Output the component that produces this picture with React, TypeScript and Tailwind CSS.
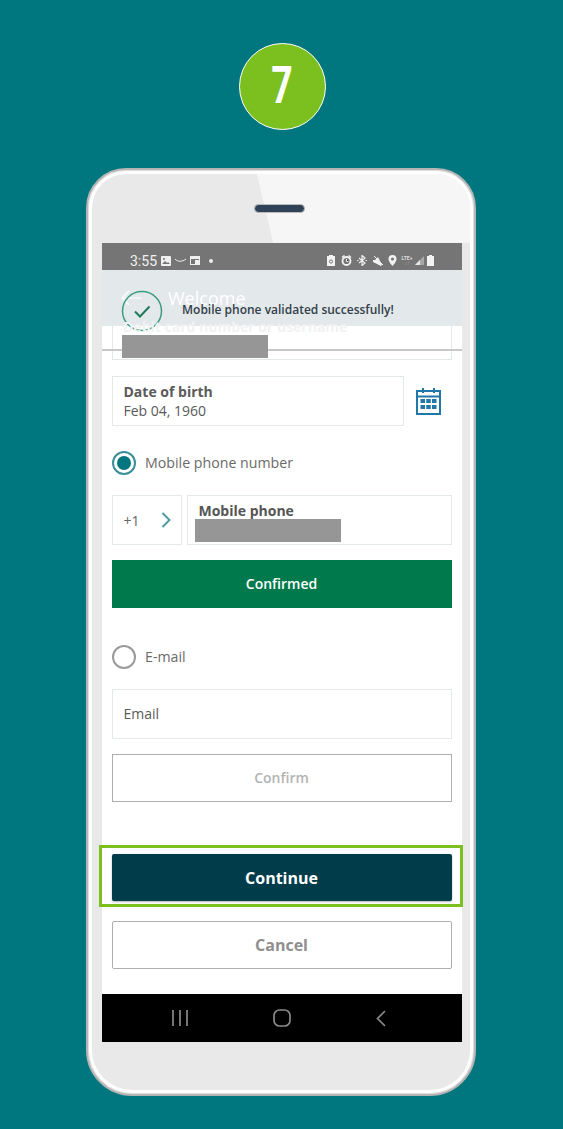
import React from "react";

const font = "font-['Open_Sans',sans-serif]";

function Radio({ checked, label }: { checked?: boolean; label: string }) {
  return (
    <div className="flex items-center gap-[9px]">
      <span
        className={`flex h-[24px] w-[24px] items-center justify-center rounded-full border-2 ${
          checked ? "border-[#3a8f98]" : "border-[#9a9a9a]"
        }`}
      >
        {checked && <span className="h-[14px] w-[14px] rounded-full bg-[#00767f]" />}
      </span>
      <span className="text-[14.2px] leading-[22px] text-[#6a6a6a]">{label}</span>
    </div>
  );
}

function StatusLeft() {
  return (
    <div className="flex items-center text-white">
      <span className="w-[30px] font-['Roboto',sans-serif] text-[14px] leading-[20px] text-[#f2f2f2]">3:55</span>
      <svg className="ml-[1px]" width="10" height="10" viewBox="0 0 10 10">
        <rect width="10" height="10" rx="1" fill="#f0f0f0" />
        <path d="M1 8l3-3 2 2 1-1 2 2z" fill="#757575" />
        <circle cx="3" cy="3" r="1" fill="#757575" />
      </svg>
      <svg className="ml-[4px]" width="11" height="6" viewBox="0 0 11 6">
        <path d="M0 1c3 3 7 3 11 0" stroke="#eee" strokeWidth="1" fill="none" />
      </svg>
      <svg className="ml-[4px]" width="10" height="9" viewBox="0 0 10 9">
        <rect x=".5" y=".5" width="9" height="8" fill="none" stroke="#eee" />
        <rect x="1" y="1" width="8" height="2" fill="#eee" />
        <rect x="5" y="4" width="4" height="4" fill="#eee" />
      </svg>
      <span className="ml-[9px] h-[4px] w-[4px] rounded-full bg-[#eee]" />
    </div>
  );
}

function StatusRight() {
  return (
    <div className="flex items-center">
      <svg width="8" height="11" viewBox="0 0 8 11">
        <path d="M2 0h4v1h2v10H0V1h2z" fill="#f2f2f2" />
        <circle cx="4" cy="6.500" r="1.600" fill="none" stroke="#757575" />
      </svg>
      <svg className="ml-[6px]" width="11" height="11" viewBox="0 0 11 11">
        <circle cx="5.500" cy="6" r="4" fill="#757575" stroke="#f2f2f2" strokeWidth="1.800" />
        <path d="M1 2.500l2.500-2M10 2.500L7.500 .5" stroke="#f2f2f2" strokeWidth="1.500" />
        <path d="M5.500 4v2.500h2" stroke="#f2f2f2" />
      </svg>
      <svg className="ml-[5px]" width="10" height="11" viewBox="0 0 10 11">
        <path d="M2 3l6 5-3 2.500V.5L8 3 2 8" stroke="#f2f2f2" strokeWidth="1.200" fill="none" />
        <path d="M0 5.500h1.500M8.500 5.500H10" stroke="#f2f2f2" />
      </svg>
      <svg className="ml-[6px]" width="10" height="10" viewBox="0 0 10 10">
        <path d="M0 4h2l3-3 4 8-1 1L0 6z" fill="#f2f2f2" />
        <path d="M1 0l9 9" stroke="#f2f2f2" />
      </svg>
      <svg className="ml-[5px]" width="9" height="11" viewBox="0 0 9 11">
        <path d="M4.500 0a4 4 0 0 1 4 4c0 3-4 7-4 7s-4-4-4-7a4 4 0 0 1 4-4z" fill="#f2f2f2" />
        <circle cx="4.500" cy="4" r="1.600" fill="#757575" />
      </svg>
      <span className="ml-[4px] flex w-[12px] flex-col items-center font-['Roboto',sans-serif] text-[5px] font-bold leading-[5px] text-[#ddd]">
        <span>LTE+</span>
        <span className="text-[#aaa]">↓↑</span>
      </span>
      <svg className="ml-[2px]" width="9" height="9" viewBox="0 0 9 9">
        <path d="M9 0v9H0z" fill="#a8a8a8" />
        <path d="M5 4v5H0z" fill="#e8e8e8" />
      </svg>
      <svg className="ml-[3px]" width="7" height="11" viewBox="0 0 7 11">
        <path d="M2 0h3v1h2v10H0V1h2z" fill="#f2f2f2" />
      </svg>
    </div>
  );
}

function Screen() {
  return (
    <div className="relative ml-[10px] flex h-[799px] w-[360px] flex-col bg-white">
      {/* status bar */}
      <div className="flex h-[27px] shrink-0 items-center justify-between bg-[#757575] pl-[28px] pr-[28px] pt-[8px]">
        <StatusLeft />
        <StatusRight />
      </div>

      {/* app header, mostly covered by the toast */}
      <div className="relative z-10 h-[56px] shrink-0 bg-[#e3e8eb]">
        <svg className="absolute left-[18px] top-[18px]" width="22" height="20" viewBox="0 0 22 20">
          <path d="M9 3l-7 7 7 7M2 10h20" stroke="#fff" strokeWidth="1.200" fill="none" />
        </svg>
        <span className="absolute left-[66px] top-[15px] text-[18px] leading-[26px] text-white">Welcome</span>
        <svg className="absolute left-[19px] top-[20px]" width="42" height="42" viewBox="0 0 42 42">
          <circle cx="21" cy="21" r="19.500" fill="none" stroke="#3a9c7c" strokeWidth="1.500" />
          <path d="M14 21.500l5 5 9.500-10" fill="none" stroke="#1e7a5a" strokeWidth="2" />
        </svg>
        <span className="absolute left-[80px] top-[31px] text-[12px] font-semibold leading-[18px] text-[#333f48]">
          Mobile phone validated successfully!
        </span>
      </div>

      <div className="flex flex-1 flex-col px-[10px]">
        {/* field scrolled under the header */}
        <div className="relative -mt-[16px] h-[50px] border border-[#e3e8eb]">
          <span className="absolute left-[10px] top-[6px] z-20 whitespace-nowrap text-[14px] font-bold leading-[20px] text-[#f0f2f3]">
            Debit card number or username
          </span>
          <div className="absolute -left-[11px] -right-[11px] top-[38px] z-10 h-[2px] bg-[#c8c8c8]" />
          <div className="absolute left-[9px] top-[24px] z-20 h-[23px] w-[146px] bg-[#969696]" />
        </div>

        <div className="mt-[16px] flex items-center">
          <div className="h-[50px] w-[292px] border border-[#e3e8eb] pl-[10.500px] pt-[5px] text-[14px] leading-[19px] text-[#5a5a5a]">
            <div className="font-bold">Date of birth</div>
            <div>Feb 04, 1960</div>
          </div>
          <svg className="ml-[12px] -mt-[1px]" width="25" height="28" viewBox="0 0 25 28" fill="none">
            <rect x="1" y="4" width="23" height="23" stroke="#1f78a8" strokeWidth="2" />
            <path d="M1 9.500h23" stroke="#1f78a8" strokeWidth="2" />
            <path d="M7 1v5M18 1v5" stroke="#1f78a8" strokeWidth="2" />
            <path
              d="M4.500 12h4.500v4h-4.500zM10.250 12h4.500v4h-4.500zM16 12h4.500v4H16zM4.500 18h4.500v4h-4.500zM10.250 18h4.500v4h-4.500zM16 18h4.500v4H16z"
              fill="#1f78a8"
            />
          </svg>
        </div>

        <div className="mt-[25px]">
          <Radio checked label="Mobile phone number" />
        </div>

        <div className="mt-[20px] flex gap-[5px]">
          <div className="flex h-[50px] w-[70px] items-center justify-between border border-[#e3e8eb] pl-[10.500px] pr-[10px] text-[14px] text-[#666]">
            <span>+1</span>
            <svg width="10" height="16" viewBox="0 0 10 16" fill="none">
              <path d="M1.500 1l7 7-7 7" stroke="#4d9aa0" strokeWidth="2" />
            </svg>
          </div>
          <div className="relative h-[50px] flex-1 border border-[#e3e8eb] pl-[10.500px] pt-[5px] text-[14px] font-bold leading-[20px] text-[#555]">
            Mobile phone
            <div className="absolute left-[7px] top-[23px] h-[23px] w-[146px] bg-[#969696]" />
          </div>
        </div>

        <button className="mt-[15px] h-[48px] bg-[#007a4d] pb-[2px] pr-[1px] text-[14px] font-semibold text-white">Confirmed</button>

        <div className="mt-[37px]">
          <Radio label="E-mail" />
        </div>

        <div className="mt-[20px] flex h-[50px] items-center border border-[#e3e8eb] pb-[2px] pl-[10.500px] text-[14px] text-[#5a5a5a]">
          Email
        </div>

        <button className="mt-[15px] h-[48px] border border-[#aeaeae] bg-white pb-[2px] pr-[1px] text-[14px] font-semibold text-[#b3b3b3]">
          Confirm
        </button>

        <div className="relative mt-[52px] h-[47px]">
          <button className="h-full w-full rounded-[2px] bg-[#003c4a] pr-[1px] text-[16px] font-bold text-white shadow-[0_1px_2px_rgba(0,0,0,0.3)]">
            Continue
          </button>
          <div className="absolute -left-[13px] -right-[11px] -top-[9px] -bottom-[6px] border-[3px] border-[#7cc01f]" />
        </div>

        <button className="mt-[20px] h-[48px] rounded-[2px] border border-[#aeaeae] bg-white pr-[1px] text-[16px] font-bold text-[#8f8f8f]">
          Cancel
        </button>
      </div>

      {/* android nav bar */}
      <div className="flex h-[48px] shrink-0 items-center justify-between bg-black pl-[70px] pr-[76px]">
        <svg width="16" height="16" viewBox="0 0 16 16">
          <path d="M1 0v16M8 0v16M15 0v16" stroke="#8a8a8a" strokeWidth="1.700" />
        </svg>
        <svg width="18" height="18" viewBox="0 0 18 18" fill="none">
          <rect x="1" y="1" width="16" height="16" rx="5.500" stroke="#8a8a8a" strokeWidth="1.700" />
        </svg>
        <svg width="10" height="17" viewBox="0 0 10 17" fill="none">
          <path d="M9 1L1.500 8.500 9 16" stroke="#8a8a8a" strokeWidth="1.700" />
        </svg>
      </div>
    </div>
  );
}

export default function App() {
  return (
    <div className={`${font} flex h-[1129px] flex-col items-center overflow-hidden bg-[#00767f] pt-[43px]`}>
      <div className="ml-[1px] flex h-[87px] w-[87px] items-center justify-center rounded-full border border-white bg-[#7cc01f]">
        <span className="-translate-y-[1px] scale-x-[0.72] font-['Roboto',sans-serif] text-[52px] font-bold leading-none text-white">7</span>
      </div>

      <div className="relative mt-[38px] -ml-[1px] h-[928px] w-[390px] rounded-t-[40px] rounded-b-[46px] border-2 border-[#b5b5b5] bg-white p-[4px] shadow-[inset_0_0_0_1px_#dedede]">
        <div className="relative h-full w-full rounded-t-[34px] rounded-b-[40px] bg-[#e9e9e9] pt-[69px]">
          <div className="absolute inset-0 rounded-tr-[34px] bg-[#f6f6f6] [clip-path:polygon(43.650%_0,100%_0,100%_7.500%,47.900%_7.500%)]" />
          <div className="absolute left-[162px] top-[30px] h-[9px] w-[51px] rounded-full border border-[#bcbcbc] bg-[#2f4257]" />
          <div className="relative">
            <Screen />
          </div>
        </div>
      </div>
    </div>
  );
}
